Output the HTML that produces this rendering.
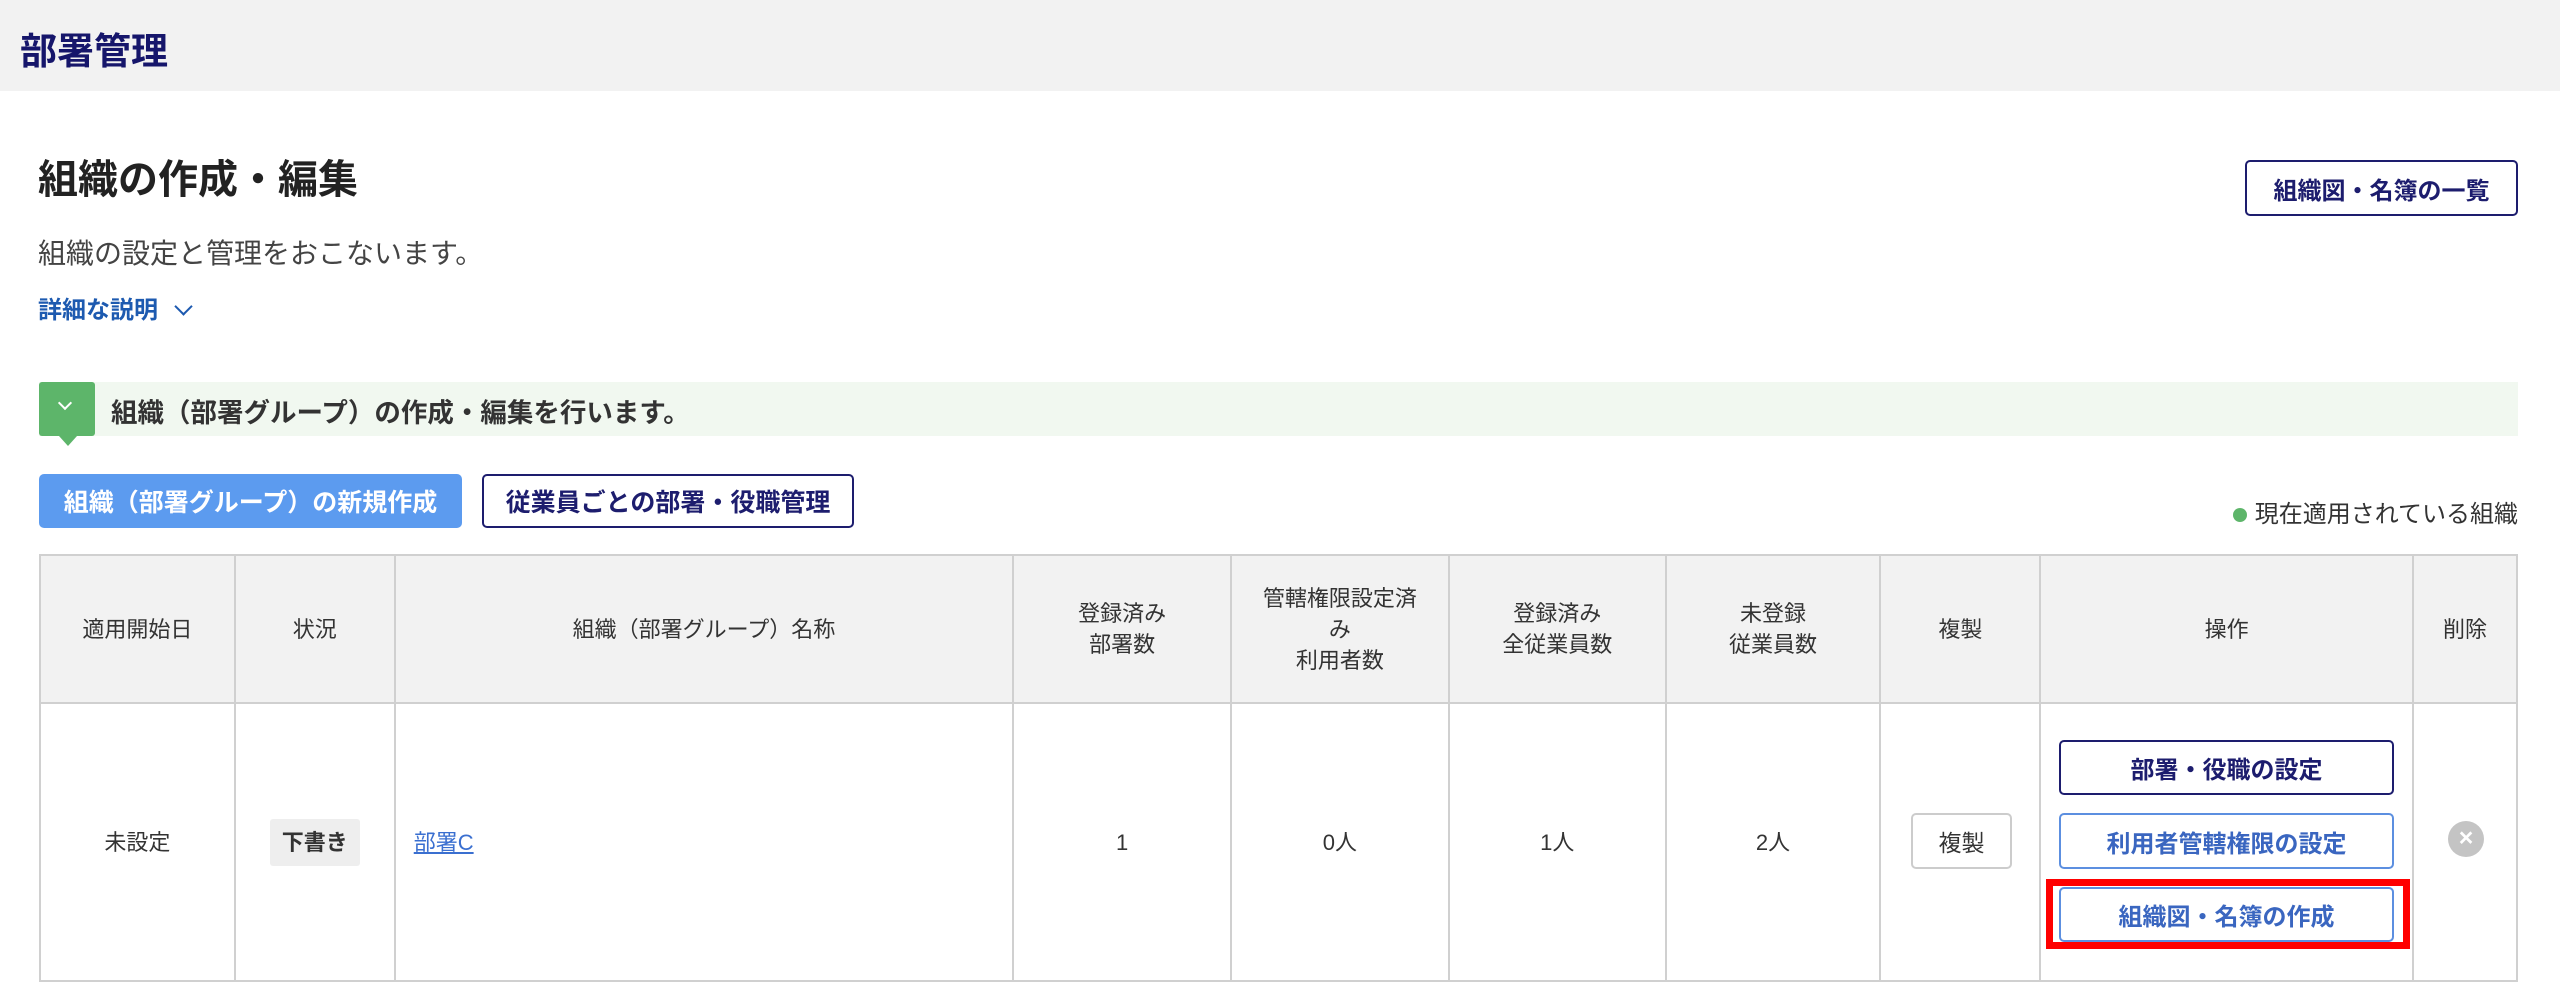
<!DOCTYPE html>
<html><head><meta charset="utf-8"><style>
*{box-sizing:border-box;margin:0;padding:0}
body{width:2560px;height:982px;background:#fff;font-family:"Liberation Sans","Noto Sans CJK JP",sans-serif;color:#333;position:relative;overflow:hidden}
.a{position:absolute}
.hdr{left:0;top:0;width:2560px;height:91px;background:#f2f2f2}
.btn{position:absolute;display:flex;align-items:center;justify-content:center;border-radius:5px;font-weight:bold;font-size:24px;background:#fff}
table{position:absolute;left:39px;top:554px;width:2479px;border-collapse:collapse;font-size:22px;color:#333}
td,th{border:2px solid #d0d0d0;text-align:center;font-weight:normal;line-height:31px}
th{background:#f2f2f2;height:148px}
td{height:278px}
</style></head><body>
<div class="a hdr"></div>
<div class="a" style="left:20px;top:21px;font-size:37px;font-weight:bold;color:#16166b">部署管理</div>
<div class="a" style="left:38px;top:147px;font-size:40px;font-weight:bold;color:#222">組織の作成・編集</div>
<div class="btn" style="left:2245px;top:160px;width:273px;height:56px;border:2px solid #1d1d6e;color:#1d1d6e">組織図・名簿の一覧</div>
<div class="a" style="left:38px;top:232px;font-size:28px;color:#444">組織の設定と管理をおこないます。</div>
<div class="a" style="left:38px;top:290px;font-size:24px;font-weight:bold;color:#1d5ab0">詳細な説明 <span style="display:inline-block;width:13px;height:13px;border-right:2.5px solid #1d5ab0;border-bottom:2.5px solid #1d5ab0;transform:rotate(45deg);margin-left:12px;position:relative;top:-5px"></span></div>
<div class="a" style="left:39px;top:382px;width:2479px;height:54px;background:#f1f8f0"></div>
<div class="a" style="left:39px;top:382px;width:56px;height:54px;background:#5db56a;border-radius:3px"></div>
<div class="a" style="left:59px;top:436px;width:0;height:0;border-left:9px solid transparent;border-right:9px solid transparent;border-top:10px solid #5db56a"></div>
<div class="a" style="left:60px;top:398px;width:10px;height:10px;border-right:2.5px solid #fff;border-bottom:2.5px solid #fff;transform:rotate(45deg)"></div>
<div class="a" style="left:111px;top:391px;font-size:26.5px;font-weight:bold;color:#333">組織（部署グループ）の作成・編集を行います。</div>
<div class="btn" style="left:39px;top:474px;width:423px;height:54px;background:#5c9bef;color:#fff;font-size:25px">組織（部署グループ）の新規作成</div>
<div class="btn" style="left:482px;top:474px;width:372px;height:54px;border:2px solid #1d1d6e;color:#1d1d6e;font-size:25px">従業員ごとの部署・役職管理</div>
<div class="a" style="right:42px;top:494px;font-size:24px;color:#333"><span style="display:inline-block;width:14px;height:14px;border-radius:50%;background:#5db56a;margin-right:8px"></span>現在適用されている組織</div>
<table>
<colgroup><col style="width:195px"><col style="width:160px"><col style="width:619px"><col style="width:218px"><col style="width:218px"><col style="width:217px"><col style="width:215px"><col style="width:160px"><col style="width:373px"><col style="width:104px"></colgroup>
<tr><th>適用開始日</th><th>状況</th><th>組織（部署グループ）名称</th><th>登録済み<br>部署数</th><th>管轄権限設定済<br>み<br>利用者数</th><th>登録済み<br>全従業員数</th><th>未登録<br>従業員数</th><th>複製</th><th>操作</th><th>削除</th></tr>
<tr><td>未設定</td><td><span style="display:inline-block;background:#eee;padding:8px 12px;border-radius:3px;font-weight:bold">下書き</span></td><td style="text-align:left;padding-left:18px"><span style="color:#3a6fd0;text-decoration:underline">部署C</span></td><td>1</td><td>0人</td><td>1人</td><td>2人</td><td></td><td></td><td></td></tr>
</table>
<div class="btn" style="left:1911px;top:813px;width:101px;height:56px;border:2px solid #ccc;font-weight:normal;font-size:23px;color:#333">複製</div>
<div class="btn" style="left:2059px;top:740px;width:335px;height:55px;border:2px solid #1d1d6e;color:#1d1d6e">部署・役職の設定</div>
<div class="btn" style="left:2059px;top:813px;width:335px;height:56px;border:2px solid #5c8fe0;color:#3a66c0">利用者管轄権限の設定</div>
<div class="a" style="left:2046px;top:879px;width:364px;height:70px;border:7px solid #f00"></div>
<div class="btn" style="left:2059px;top:887px;width:335px;height:55px;border:2px solid #5c8fe0;color:#3a66c0">組織図・名簿の作成</div>
<div class="a" style="left:2448px;top:821px;width:36px;height:36px;border-radius:50%;background:#c4c4c4;color:#fff;font-size:25px;line-height:35px;text-align:center;font-weight:bold">×</div>
</body></html>
